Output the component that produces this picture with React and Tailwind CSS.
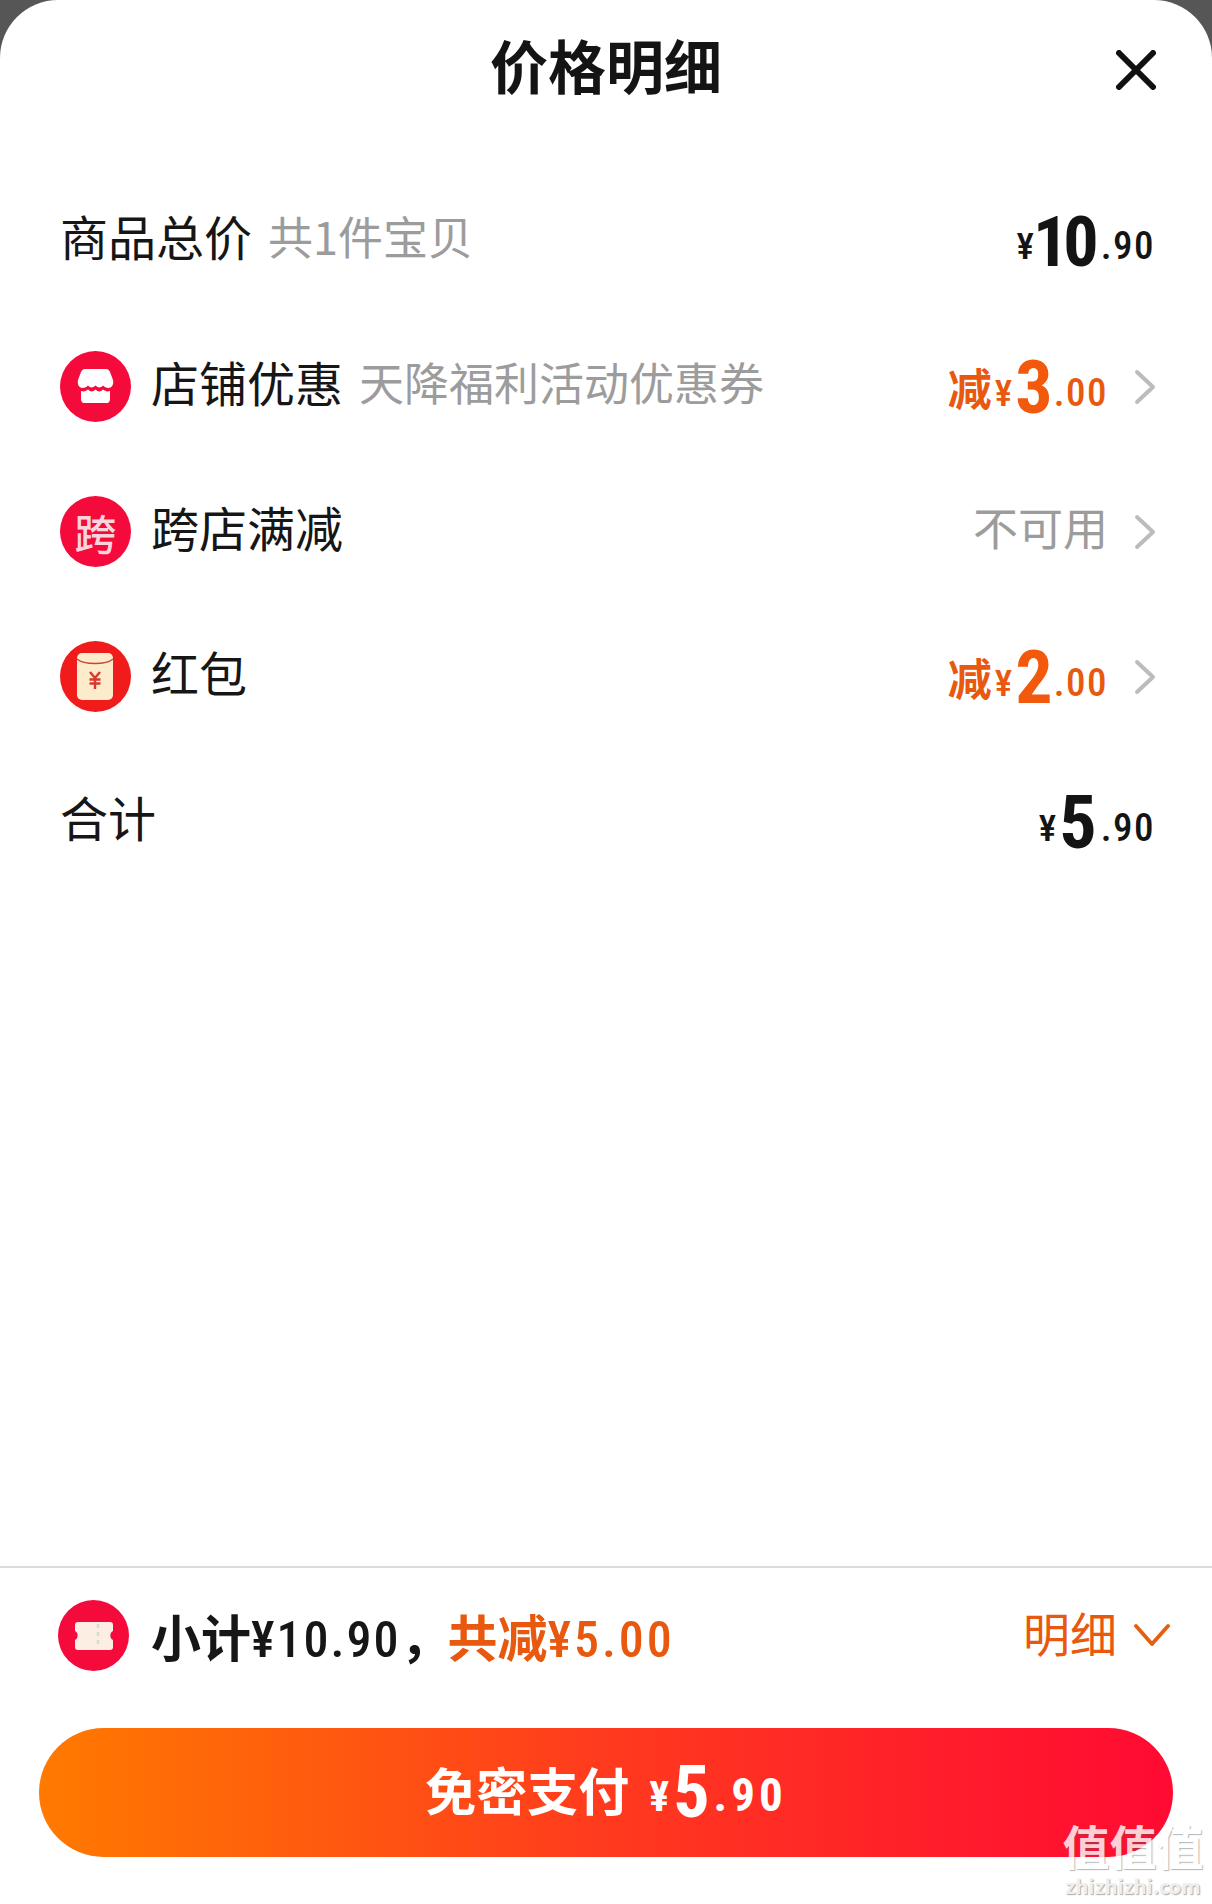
const DIGITS = "[font-family:Roboto,sans-serif] [font-stretch:75%]";

const Chevron = () => (
  <svg width="22" height="36" viewBox="0 0 22 36" fill="none" className="ml-[26px] shrink-0">
    <path d="M3 3 L19 18 L3 33" stroke="#bcbcbc" strokeWidth="4" strokeLinecap="round" strokeLinejoin="round" />
  </svg>
);

const ShopIcon = () => (
  <svg width="71" height="71" viewBox="0 0 71 71" className="shrink-0">
    <circle cx="35.5" cy="35.5" r="35.5" fill="#f50a3c" />
    <path d="M25 18 H46 C48 18 49 19 50 21 L53 29 C54 33 52 37 48.500 37 C46 37 44.500 36 43 34.500 C41 37 38 37 35.500 34.500 C33 37 30 37 28 34.500 C26.500 36 25 37 22.500 37 C19 37 17 33 18 29 L21 21 C22 19 23 18 25 18 Z" fill="#fff" />
    <path d="M21 40 C24 41 26 40 28 38.500 C30.500 41 33 41 35.500 38.500 C38 41 40.500 41 43 38.500 C45 40 47 41 50 40 V48 C50 50 49 52 47 52 H24 C22 52 21 50 21 48 Z" fill="#fff" />
  </svg>
);

const CrossIcon = () => (
  <span className="flex h-[71px] w-[71px] shrink-0 items-center justify-center rounded-full bg-[#f50a3c] text-[42px] font-medium leading-none text-[#fbd3dc]">
    跨
  </span>
);

const RedPacketIcon = () => (
  <svg width="71" height="71" viewBox="0 0 71 71" className="shrink-0">
    <circle cx="35.500" cy="35.500" r="35.500" fill="#f01c1c" />
    <rect x="17" y="12" width="36" height="47" rx="5" fill="#fdeccb" />
    <path d="M17 18 C24 24 46 24 53 18" stroke="#c8453b" strokeWidth="1.400" fill="none" />
    <path d="M30 31 L35 37 L40 31 M29.500 38.500 H40.500 M29.500 42.500 H40.500 M35 37 V48" stroke="#d9382e" strokeWidth="2.400" fill="none" />
  </svg>
);

const TicketIcon = () => (
  <svg width="71" height="71" viewBox="0 0 71 71" className="shrink-0">
    <circle cx="35.500" cy="35.500" r="35.500" fill="#f50a3c" />
    <path d="M20 22 H52 C54 22 55 23 55 25 V31 C51.500 32.500 51.500 38.500 55 40 V47 C55 49 54 50 52 50 H20 C18 50 17 49 17 47 V40 C20.500 38.500 20.500 32.500 17 31 V25 C17 23 18 22 20 22 Z" fill="#fdeee4" />
    <path d="M40 24 V48" stroke="#cfe0c8" strokeWidth="2.500" strokeDasharray="4 4" />
  </svg>
);

const Price = ({ prefix, yuan, cents, orange, yuanClass = 'text-[74px] tracking-[-3px]', className = 'mt-[2px]' }) => (
  <span className={`flex items-baseline font-bold leading-none ${orange ? 'text-[#f2590c]' : 'text-[#141414]'} ${className}`}>
    {prefix && <span className="mr-[3px] -translate-y-[7px] text-[44px] text-[#e8590f]">{prefix}</span>}
    <span className={`${DIGITS} mr-[3px] -translate-y-[7px] text-[37px] font-medium ${orange ? 'text-[#e8590f]' : ''}`}>¥</span>
    <span className={`${DIGITS} ${yuanClass}`}>{yuan}</span>
    <span className={`${DIGITS} ${orange ? 'ml-[4px] text-[#e8590f]' : 'ml-[7px]'} -translate-y-[7px] text-[39px] font-medium tracking-[1.500px]`}>.{cents}</span>
  </span>
);

const Row = ({ icon, label, note, right, arrow, className = '' }) => (
  <div className={`flex h-[145px] items-center pl-[60px] pr-[56px] ${className}`}>
    {icon && <span className="mr-[20px]">{icon}</span>}
    <span className="mb-[11px] text-[48px] leading-none text-[#161616]">{label}</span>
    {note && <span className="mb-[11px] ml-[16px] text-[45px] leading-none text-[#9c9c9c]">{note}</span>}
    <span className="ml-auto flex items-center">
      {right}
      {arrow && <Chevron />}
    </span>
  </div>
);

export default function App() {
  return (
    <div className="h-[1904px] w-[1212px] overflow-hidden bg-[#565656] [font-family:'Noto_Sans_CJK_SC',sans-serif]">
      <div className="relative flex h-full flex-col rounded-t-[58px] bg-white">
        <header className="grid h-[132px] grid-cols-[1fr_auto_1fr] items-center px-[56px]">
          <span />
          <h1 className="mb-[4px] text-[58px] font-bold leading-none text-[#141414]">价格明细</h1>
          <svg width="40" height="40" viewBox="0 0 40 40" fill="none" className="mt-[8px] justify-self-end">
            <path d="M3 3 L37 37 M37 3 L3 37" stroke="#111" strokeWidth="6" strokeLinecap="round" />
          </svg>
        </header>

        <div className="mt-[36px]">
          <Row
            className="mb-[1px]"
            label="商品总价"
            note="共1件宝贝"
            right={
              <Price
                yuan="10"
                cents="90"
                yuanClass="-ml-[4px] text-[70px] tracking-[-5px]"
                className="mt-[2px] mr-[1px]"
              />
            }
          />
          <Row
            icon={<ShopIcon />}
            label="店铺优惠"
            note="天降福利活动优惠券"
            right={<Price prefix="减" yuan="3" cents="00" orange />}
            arrow
          />
          <Row
            icon={<CrossIcon />}
            label="跨店满减"
            right={<span className="mb-[10px] text-[45px] leading-none text-[#9c9c9c]">不可用</span>}
            arrow
          />
          <Row
            icon={<RedPacketIcon />}
            label="红包"
            right={<Price prefix="减" yuan="2" cents="00" orange />}
            arrow
          />
          <Row label="合计" right={<Price yuan="5" cents="90" className="mt-[2px] mr-[1px]" />} />
        </div>

        <footer className="mt-auto border-t-2 border-[#dcdcdc] pb-[47px]">
          <div className="flex h-[160px] items-center pb-[26px] pl-[58px] pr-[42px]">
            <TicketIcon />
            <span className="ml-[22px] mt-[4px] text-[50px] font-bold leading-none text-[#161616]">
              小计<span className={`${DIGITS} font-medium tracking-[2px]`}>¥10.90</span>，
            </span>
            <span className="-ml-[3px] mt-[4px] text-[50px] font-bold leading-none text-[#e8590f]">
              共减<span className={`${DIGITS} font-medium tracking-[3px]`}>¥5.00</span>
            </span>
            <span className="mb-[8px] ml-auto text-[47px] leading-none text-[#e8590f]">明细</span>
            <svg width="36" height="24" viewBox="0 0 36 24" fill="none" className="ml-[17px]">
              <path d="M2 3 L18 21 L34 3" stroke="#e2600f" strokeWidth="3.800" strokeLinecap="round" strokeLinejoin="round" />
            </svg>
          </div>
          <button className="mx-[39px] flex h-[129px] w-[1134px] items-center justify-center rounded-full bg-linear-to-r/srgb from-[#ff7a00] via-[#ff3a1e] to-[#ff0a33] text-white">
            <span className="mb-[6px] text-[51px] font-bold leading-none">免密支付</span>
            <span className={`${DIGITS} ml-[20px] flex items-baseline font-bold leading-none`}>
              <span className="-translate-y-[6px] text-[42px]">¥</span>
              <span className="ml-[4px] text-[72px]">5</span>
              <span className="ml-[4px] -translate-y-[6px] text-[47px] tracking-[4px]">.90</span>
            </span>
          </button>
        </footer>

        <div className="pointer-events-none absolute bottom-[8px] right-[8px] flex w-[142px] flex-col items-center text-white [text-shadow:1px_1px_1px_rgba(90,90,90,0.55)]">
          <span className="text-[47px] font-bold leading-none opacity-80">值值值</span>
          <span className="mt-[8px] text-[20px] font-bold leading-none text-[#eeeeee] opacity-90">zhizhizhi.com</span>
        </div>
      </div>
    </div>
  );
}
